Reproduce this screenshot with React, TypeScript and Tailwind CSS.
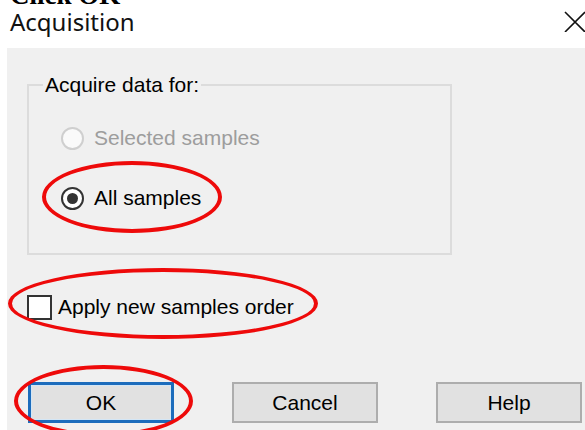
import React from 'react';

// red hand-drawn style highlight rings laid over the dialog
const Ring: React.FC<{ className: string }> = ({ className }) => (
  <div className={`pointer-events-none absolute rounded-[50%] border-[4px] border-[#ee0a0a] ${className}`} />
);

const Radio: React.FC<{ label: string; checked?: boolean; disabled?: boolean }> = ({ label, checked, disabled }) => (
  <div className="flex h-[30px] items-center gap-[10px]">
    {checked ? (
      <span className="flex h-[23px] w-[23px] items-center justify-center rounded-full border-2 border-[#333333] bg-white">
        <span className="h-[11px] w-[11px] rounded-full bg-[#333333]" />
      </span>
    ) : (
      <span className="h-[23px] w-[23px] rounded-full border-2 border-[#cfcfcf] bg-[#fafafa]" />
    )}
    <span className={disabled ? 'text-[21px] text-[#9d9d9d]' : 'text-[21px] text-black'}>{label}</span>
  </div>
);

const Button: React.FC<{ label: string; primary?: boolean }> = ({ label, primary }) => (
  <button
    className={
      primary
        ? 'h-[41px] w-[146px] border-[3px] border-[#1c6cbc] bg-[#e1e1e1] text-[21px] text-black shadow-[inset_0_0_0_1px_#d3e6f6]'
        : 'h-[41px] w-[146px] border-2 border-[#adadad] bg-[#e1e1e1] text-[21px] text-black'
    }
  >
    {label}
  </button>
);

export default function App() {
  return (
    <div className="relative h-[430px] w-[585px] overflow-hidden bg-white font-['Liberation_Sans',Arial,sans-serif] text-black">
      {/* caption above the dialog, mostly scrolled out */}
      <div className="h-[7px] overflow-hidden pl-[10px]">
        <div className="-mt-[18px] font-['Liberation_Serif',serif] text-[27px] font-bold leading-[27px]">Click OK</div>
      </div>

      {/* title bar */}
      <div className="flex h-[41px] items-start justify-between pl-[10px]">
        <div className="font-['Noto_Sans',sans-serif] text-[24px] leading-[30px] text-[#111]">Acquisition</div>
        <svg className="mt-[4px]" width="21" height="21" viewBox="0 0 21 21">
          <path d="M1 1 L21 21 M21 1 L1 21" stroke="#111" strokeWidth="1.6" fill="none" />
        </svg>
      </div>

      {/* dialog body */}
      <div className="ml-[7px] h-[382px] bg-[#f0f0f0] pl-[20px] pt-[25px]">
        <fieldset className="w-[425px] border-2 border-[#dcdcdc] p-0">
          <legend className="ml-[14px] px-[2px] text-[21px] leading-[24px]">Acquire data for:</legend>
          <div className="flex flex-col gap-[30px] pb-[40px] pl-[32px] pt-[26px]">
            <Radio label="Selected samples" disabled />
            <Radio label="All samples" checked />
          </div>
        </fieldset>

        <div className="mt-[37px] flex h-[30px] items-center gap-[6px]">
          <span className="h-[25px] w-[25px] border-2 border-[#333333] bg-white" />
          <span className="text-[21px]">Apply new samples order</span>
        </div>

        <div className="mt-[60px] flex gap-[58px] pl-[1px]">
          <Button label="OK" primary />
          <Button label="Cancel" />
          <Button label="Help" />
        </div>
      </div>

      <Ring className="left-[42px] top-[161px] h-[72px] w-[180px]" />
      <Ring className="left-[8px] top-[268px] h-[71px] w-[310px]" />
      <Ring className="left-[14px] top-[365px] h-[72px] w-[179px]" />
    </div>
  );
}
